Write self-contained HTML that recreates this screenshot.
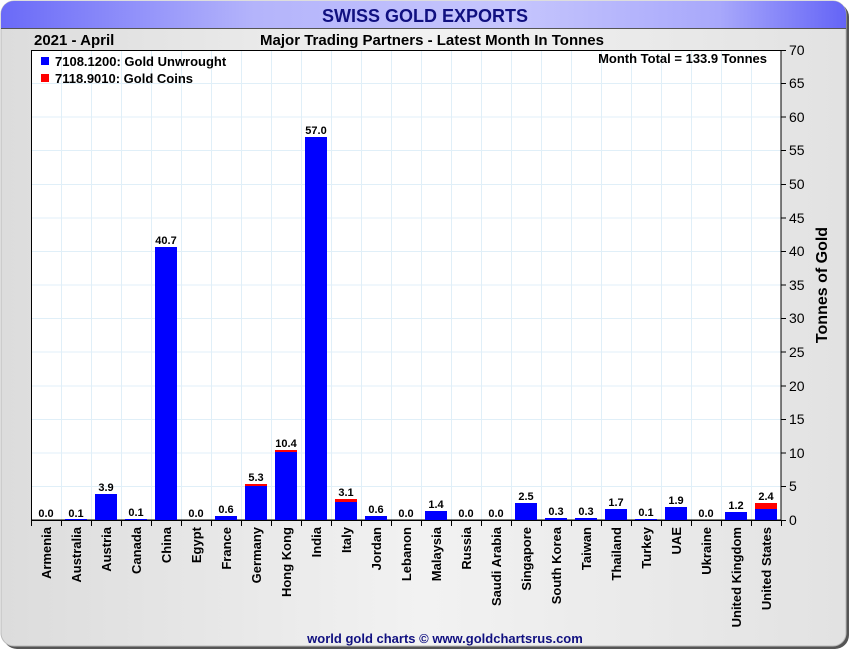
<!DOCTYPE html>
<html><head><style>
html,body{margin:0;padding:0;width:850px;height:650px;overflow:hidden;background:#fff;}
svg{display:block;font-family:"Liberation Sans",Arial,sans-serif;}
</style></head><body>
<svg width="850" height="650" viewBox="0 0 850 650" xmlns="http://www.w3.org/2000/svg">
<defs>
<linearGradient id="tb" x1="0" x2="1" y1="0" y2="0">
<stop offset="0" stop-color="#6a6af8"/><stop offset="0.3" stop-color="#b4b4fb"/><stop offset="0.6" stop-color="#c6c6fd"/><stop offset="0.85" stop-color="#a8a8fb"/><stop offset="1" stop-color="#6464f6"/>
</linearGradient>
<linearGradient id="bg" x1="0" x2="1" y1="0" y2="0">
<stop offset="0" stop-color="#dcdcdc"/><stop offset="0.5" stop-color="#f2f2f2"/><stop offset="1" stop-color="#e2e2e2"/>
</linearGradient>
</defs>
<rect x="3" y="3" width="846" height="646" rx="14" fill="#555"/>
<rect x="1" y="1" width="845" height="645" rx="13" fill="url(#bg)" stroke="#bbb"/>
<path d="M14 1 H833 A13 13 0 0 1 846 14 V28 H1 V14 A13 13 0 0 1 14 1Z" fill="url(#tb)"/>
<line x1="1" y1="28.5" x2="846" y2="28.5" stroke="#555"/>
<text x="425" y="22" text-anchor="middle" font-size="18" font-weight="bold" fill="#101080">SWISS GOLD EXPORTS</text>
<text x="34" y="45" font-size="15" font-weight="bold" fill="#000">2021 - April</text>
<text x="432" y="45" text-anchor="middle" font-size="15" font-weight="bold" fill="#000">Major Trading Partners - Latest Month In Tonnes</text>
<rect x="31" y="50" width="750" height="470" fill="#fff"/>
<g stroke="#e0eff8" stroke-width="1">
<line x1="61.5" y1="50" x2="61.5" y2="520"/><line x1="91.5" y1="50" x2="91.5" y2="520"/><line x1="121.5" y1="50" x2="121.5" y2="520"/><line x1="151.5" y1="50" x2="151.5" y2="520"/><line x1="181.5" y1="50" x2="181.5" y2="520"/><line x1="211.5" y1="50" x2="211.5" y2="520"/><line x1="241.5" y1="50" x2="241.5" y2="520"/><line x1="271.5" y1="50" x2="271.5" y2="520"/><line x1="301.5" y1="50" x2="301.5" y2="520"/><line x1="331.5" y1="50" x2="331.5" y2="520"/><line x1="361.5" y1="50" x2="361.5" y2="520"/><line x1="391.5" y1="50" x2="391.5" y2="520"/><line x1="421.5" y1="50" x2="421.5" y2="520"/><line x1="451.5" y1="50" x2="451.5" y2="520"/><line x1="481.5" y1="50" x2="481.5" y2="520"/><line x1="511.5" y1="50" x2="511.5" y2="520"/><line x1="541.5" y1="50" x2="541.5" y2="520"/><line x1="571.5" y1="50" x2="571.5" y2="520"/><line x1="601.5" y1="50" x2="601.5" y2="520"/><line x1="631.5" y1="50" x2="631.5" y2="520"/><line x1="661.5" y1="50" x2="661.5" y2="520"/><line x1="691.5" y1="50" x2="691.5" y2="520"/><line x1="721.5" y1="50" x2="721.5" y2="520"/><line x1="751.5" y1="50" x2="751.5" y2="520"/>
<line x1="31" y1="486.5" x2="781" y2="486.5"/><line x1="31" y1="453" x2="781" y2="453"/><line x1="31" y1="419.5" x2="781" y2="419.5"/><line x1="31" y1="386" x2="781" y2="386"/><line x1="31" y1="352" x2="781" y2="352"/><line x1="31" y1="318.5" x2="781" y2="318.5"/><line x1="31" y1="285" x2="781" y2="285"/><line x1="31" y1="251.5" x2="781" y2="251.5"/><line x1="31" y1="218" x2="781" y2="218"/><line x1="31" y1="184.5" x2="781" y2="184.5"/><line x1="31" y1="150.5" x2="781" y2="150.5"/><line x1="31" y1="117" x2="781" y2="117"/><line x1="31" y1="83.5" x2="781" y2="83.5"/>
</g>
<rect x="31.5" y="50.5" width="749.5" height="469.5" fill="none" stroke="#000"/>
<!-- bars -->
<g fill="#0000ff">
<rect x="65" y="519" width="22" height="1"/>
<rect x="95" y="494" width="22" height="26"/>
<rect x="125" y="519" width="22" height="1"/>
<rect x="155" y="247" width="22" height="273"/>
<rect x="215" y="516" width="22" height="4"/>
<rect x="245" y="484" width="22" height="36"/>
<rect x="275" y="450" width="22" height="70"/>
<rect x="305" y="137" width="22" height="383"/>
<rect x="335" y="499" width="22" height="21"/>
<rect x="365" y="516" width="22" height="4"/>
<rect x="425" y="511" width="22" height="9"/>
<rect x="515" y="503" width="22" height="17"/>
<rect x="545" y="518" width="22" height="2"/>
<rect x="575" y="518" width="22" height="2"/>
<rect x="605" y="509" width="22" height="11"/>
<rect x="635" y="519" width="22" height="1"/>
<rect x="665" y="507" width="22" height="13"/>
<rect x="725" y="512" width="22" height="8"/>
<rect x="755" y="509" width="22" height="11"/>
</g>
<g fill="#ff0000">
<rect x="245" y="484" width="22" height="2"/>
<rect x="275" y="450" width="22" height="2"/>
<rect x="335" y="499" width="22" height="3"/>
<rect x="755" y="503" width="22" height="6"/>
</g>
<g font-size="11" font-weight="bold" text-anchor="middle" fill="#000">
<text x="46" y="517">0.0</text><text x="76" y="517">0.1</text><text x="106" y="491">3.9</text><text x="136" y="516">0.1</text><text x="166" y="244">40.7</text><text x="196" y="517">0.0</text><text x="226" y="513">0.6</text><text x="256" y="481">5.3</text><text x="286" y="447">10.4</text><text x="316" y="134">57.0</text><text x="346" y="496">3.1</text><text x="376" y="513">0.6</text><text x="406" y="517">0.0</text><text x="436" y="508">1.4</text><text x="466" y="517">0.0</text><text x="496" y="517">0.0</text><text x="526" y="500">2.5</text><text x="556" y="515">0.3</text><text x="586" y="515">0.3</text><text x="616" y="506">1.7</text><text x="646" y="516">0.1</text><text x="676" y="504">1.9</text><text x="706" y="517">0.0</text><text x="736" y="509">1.2</text><text x="766" y="500">2.4</text>
</g>
<!-- axis ticks -->
<g stroke="#000">
<line x1="31" y1="520.5" x2="781" y2="520.5"/>
<line x1="31.5" y1="520" x2="31.5" y2="526"/><line x1="61.5" y1="520" x2="61.5" y2="526"/><line x1="91.5" y1="520" x2="91.5" y2="526"/><line x1="121.5" y1="520" x2="121.5" y2="526"/><line x1="151.5" y1="520" x2="151.5" y2="526"/><line x1="181.5" y1="520" x2="181.5" y2="526"/><line x1="211.5" y1="520" x2="211.5" y2="526"/><line x1="241.5" y1="520" x2="241.5" y2="526"/><line x1="271.5" y1="520" x2="271.5" y2="526"/><line x1="301.5" y1="520" x2="301.5" y2="526"/><line x1="331.5" y1="520" x2="331.5" y2="526"/><line x1="361.5" y1="520" x2="361.5" y2="526"/><line x1="391.5" y1="520" x2="391.5" y2="526"/><line x1="421.5" y1="520" x2="421.5" y2="526"/><line x1="451.5" y1="520" x2="451.5" y2="526"/><line x1="481.5" y1="520" x2="481.5" y2="526"/><line x1="511.5" y1="520" x2="511.5" y2="526"/><line x1="541.5" y1="520" x2="541.5" y2="526"/><line x1="571.5" y1="520" x2="571.5" y2="526"/><line x1="601.5" y1="520" x2="601.5" y2="526"/><line x1="631.5" y1="520" x2="631.5" y2="526"/><line x1="661.5" y1="520" x2="661.5" y2="526"/><line x1="691.5" y1="520" x2="691.5" y2="526"/><line x1="721.5" y1="520" x2="721.5" y2="526"/><line x1="751.5" y1="520" x2="751.5" y2="526"/><line x1="781.5" y1="520" x2="781.5" y2="526"/>
<line x1="781" y1="520.5" x2="786" y2="520.5"/><line x1="781" y1="486.5" x2="786" y2="486.5"/><line x1="781" y1="453" x2="786" y2="453"/><line x1="781" y1="419.5" x2="786" y2="419.5"/><line x1="781" y1="386" x2="786" y2="386"/><line x1="781" y1="352" x2="786" y2="352"/><line x1="781" y1="318.5" x2="786" y2="318.5"/><line x1="781" y1="285" x2="786" y2="285"/><line x1="781" y1="251.5" x2="786" y2="251.5"/><line x1="781" y1="218" x2="786" y2="218"/><line x1="781" y1="184.5" x2="786" y2="184.5"/><line x1="781" y1="150.5" x2="786" y2="150.5"/><line x1="781" y1="117" x2="786" y2="117"/><line x1="781" y1="83.5" x2="786" y2="83.5"/><line x1="781" y1="50.5" x2="786" y2="50.5"/>
</g>
<g font-size="14" fill="#000">
<text x="789" y="525">0</text><text x="789" y="491">5</text><text x="789" y="458">10</text><text x="789" y="424">15</text><text x="789" y="391">20</text><text x="789" y="357">25</text><text x="789" y="323">30</text><text x="789" y="290">35</text><text x="789" y="256">40</text><text x="789" y="223">45</text><text x="789" y="189">50</text><text x="789" y="155">55</text><text x="789" y="122">60</text><text x="789" y="88">65</text><text x="789" y="55">70</text>
</g>
<text transform="translate(827,285) rotate(-90)" text-anchor="middle" font-size="16" font-weight="bold">Tonnes of Gold</text>
<g font-size="13" font-weight="bold" text-anchor="end" fill="#000">
<text transform="translate(51,527) rotate(-90)">Armenia</text>
<text transform="translate(81,527) rotate(-90)">Australia</text>
<text transform="translate(111,527) rotate(-90)">Austria</text>
<text transform="translate(141,527) rotate(-90)">Canada</text>
<text transform="translate(171,527) rotate(-90)">China</text>
<text transform="translate(201,527) rotate(-90)">Egypt</text>
<text transform="translate(231,527) rotate(-90)">France</text>
<text transform="translate(261,527) rotate(-90)">Germany</text>
<text transform="translate(291,527) rotate(-90)">Hong Kong</text>
<text transform="translate(321,527) rotate(-90)">India</text>
<text transform="translate(351,527) rotate(-90)">Italy</text>
<text transform="translate(381,527) rotate(-90)">Jordan</text>
<text transform="translate(411,527) rotate(-90)">Lebanon</text>
<text transform="translate(441,527) rotate(-90)">Malaysia</text>
<text transform="translate(471,527) rotate(-90)">Russia</text>
<text transform="translate(501,527) rotate(-90)">Saudi Arabia</text>
<text transform="translate(531,527) rotate(-90)">Singapore</text>
<text transform="translate(561,527) rotate(-90)">South Korea</text>
<text transform="translate(591,527) rotate(-90)">Taiwan</text>
<text transform="translate(621,527) rotate(-90)">Thailand</text>
<text transform="translate(651,527) rotate(-90)">Turkey</text>
<text transform="translate(681,527) rotate(-90)">UAE</text>
<text transform="translate(711,527) rotate(-90)">Ukraine</text>
<text transform="translate(741,527) rotate(-90)">United Kingdom</text>
<text transform="translate(771,527) rotate(-90)">United States</text>
</g>
<rect x="41" y="57" width="8" height="8" fill="#0000ff"/>
<rect x="41" y="74" width="8" height="8" fill="#ff0000"/>
<g font-size="13" font-weight="bold" fill="#000">
<text x="55" y="66">7108.1200: Gold Unwrought</text>
<text x="55" y="83">7118.9010: Gold Coins</text>
<text x="767" y="63" text-anchor="end">Month Total = 133.9 Tonnes</text>
</g>
<text x="445" y="643" text-anchor="middle" font-size="13" font-weight="bold" fill="#101080">world gold charts © www.goldchartsrus.com</text>
</svg>
</body></html>
